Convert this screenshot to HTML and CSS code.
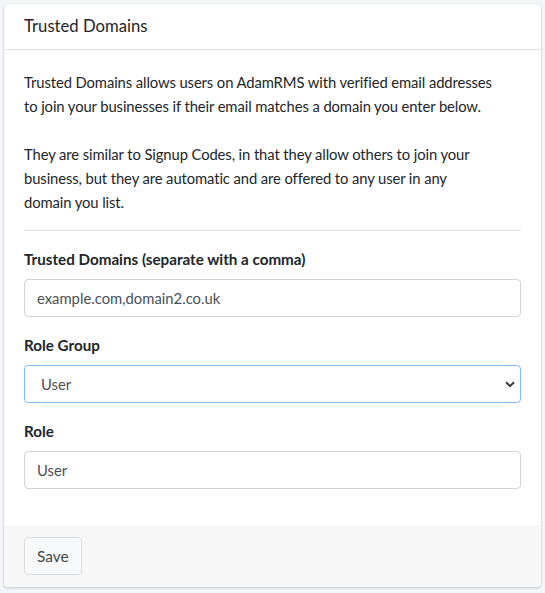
FILE: index.html
```html
<!DOCTYPE html>
<html lang="en">
<head>
<meta charset="utf-8">
<title>Trusted Domains</title>
<link rel="stylesheet" href="styles.css">
</head>
<body>
<div class="card">
  <div class="card-header">
    <h3 class="card-title">Trusted Domains</h3>
  </div>
  <div class="card-body">
    <p class="intro">Trusted Domains allows users on AdamRMS with verified email addresses to join your businesses if their email matches a domain you enter below.</p>
    <p class="intro">They are similar to Signup Codes, in that they allow others to join your business, but they are automatic and are offered to any user in any domain you list.</p>
    <hr class="divider">
    <div class="form-group">
      <label class="form-label" for="domains">Trusted Domains (separate with a comma)</label>
      <input class="form-control" id="domains" type="text" value="example.com,domain2.co.uk">
    </div>
    <div class="form-group">
      <label class="form-label" for="rolegroup">Role Group</label>
      <div class="select-wrap">
        <select class="form-control form-select" id="rolegroup">
          <option>User</option>
        </select>
        <svg class="chevron" width="10" height="7" viewBox="0 0 10 7" aria-hidden="true"><path d="M1 1.2 L5 5.2 L9 1.2" fill="none" stroke="#3a3a3a" stroke-width="2"/></svg>
      </div>
    </div>
    <div class="form-group">
      <label class="form-label" for="role">Role</label>
      <input class="form-control" id="role" type="text" value="User">
    </div>
  </div>
  <div class="card-footer">
    <button class="btn" type="button">Save</button>
  </div>
</div>
</body>
</html>
```
FILE: styles.css
```css
* { box-sizing: border-box; }
html, body { margin: 0; }
body {
  background: #f4f6f9;
  padding: 4px;
  font-family: Lato, "Liberation Sans", sans-serif;
  font-size: 14.8px;
  line-height: 24px;
  color: #212529;
}
.card {
  width: 537px;
  background: #fff;
  border-radius: 4px;
  box-shadow: 0 0 1px rgba(0,0,0,.125), 0 1px 3px rgba(0,0,0,.2);
}
.card-header {
  padding: 12px 20px;
  border-bottom: 1px solid rgba(0,0,0,.125);
}
.card-title {
  margin: 0;
  font-size: 16.7px;
  font-weight: 400;
  line-height: 21px;
}
.card-body {
  padding: 20px;
}
.intro {
  margin: 0 0 24px;
  max-width: 471px;
  letter-spacing: -0.1px;
}
.intro + .intro { margin-bottom: 0; }
.divider {
  margin: 16px 0;
  border: 0;
  border-top: 1px solid rgba(0,0,0,.1);
  height: 0;
}
.form-group { margin-bottom: 16px; }
.form-label {
  display: block;
  font-size: 15.2px;
  font-weight: 700;
  margin-bottom: 8px;
}
.form-control {
  display: block;
  width: 100%;
  height: 38px;
  padding: 6px 12px;
  font-family: inherit;
  font-size: 14.8px;
  line-height: 24px;
  color: #495057;
  background: #fff;
  border: 1px solid #ced4da;
  border-radius: 4px;
  outline: none;
  margin: 0;
}
.select-wrap { position: relative; }
.form-select {
  -webkit-appearance: none;
  appearance: none;
  padding-left: 16px;
  border-color: #80bdff;
}
.chevron {
  position: absolute;
  right: 6px;
  top: 16px;
  pointer-events: none;
}
.card-footer {
  padding: 12px 20px;
  background: #f7f7f7;
  border-radius: 0 0 4px 4px;
}
.btn {
  display: inline-block;
  height: 38px;
  padding: 6px 12px;
  font-family: inherit;
  font-size: 15.4px;
  line-height: 24px;
  color: #444;
  background: #f8f9fa;
  border: 1px solid #ddd;
  border-radius: 4px;
}
```
